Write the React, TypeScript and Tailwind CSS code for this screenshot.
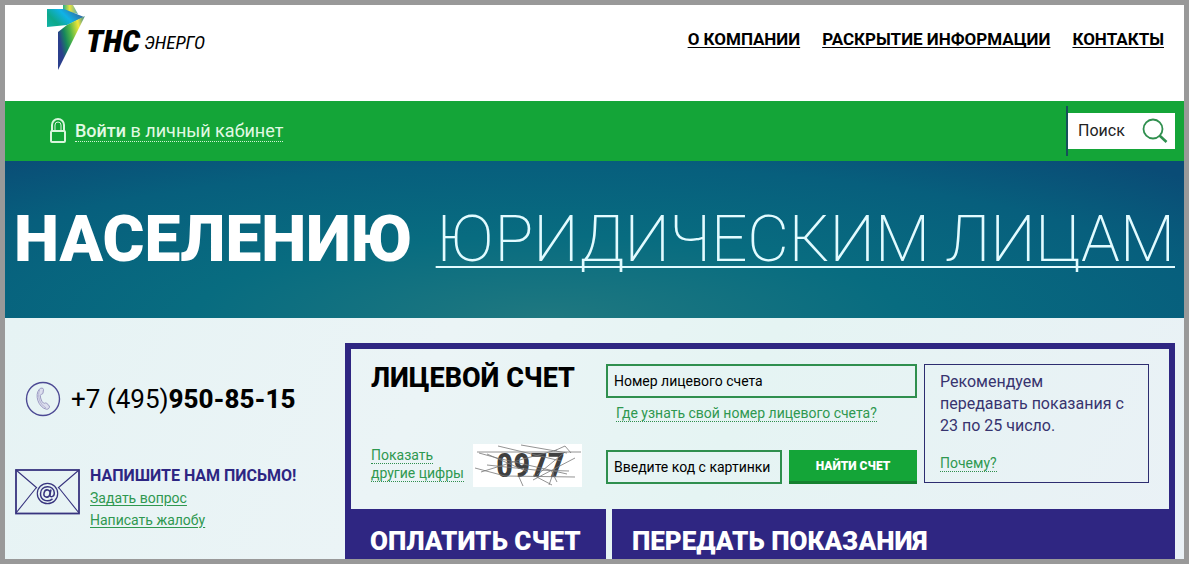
import { ReactNode } from "react";

const navItems = ["О компании", "Раскрытие информации", "Контакты"];

const letterLinks = ["Задать вопрос", "Написать жалобу"];

const tiles = [
  { title: "Оплатить счет", style: "w-[261px] pl-[25px]" },
  { title: "Передать показания", style: "flex-1 pl-5" },
];

function Logo() {
  return (
    <a href="#" aria-label="ТНС энерго" className="flex items-start text-black">
      <svg width="40" height="66" viewBox="0 0 40 66" aria-hidden="true">
        <defs>
          <linearGradient id="top" x1="0" x2="1">
            <stop offset="0" stopColor="#22ac8e" />
            <stop offset="0.45" stopColor="#e9e23c" />
            <stop offset="1" stopColor="#55a9b4" />
          </linearGradient>
          <linearGradient id="wing" x1="0" y1="1" x2="1" y2="0.5">
            <stop offset="0" stopColor="#10b2a8" />
            <stop offset="0.3" stopColor="#0ea88a" />
            <stop offset="0.65" stopColor="#10b2e6" />
            <stop offset="1" stopColor="#2f6fa8" />
          </linearGradient>
          <linearGradient id="stem" x1="0" y1="0.6" x2="1" y2="0.2">
            <stop offset="0.1" stopColor="#2b3f8c" />
            <stop offset="0.3" stopColor="#17875c" />
            <stop offset="0.5" stopColor="#4fb647" />
            <stop offset="0.8" stopColor="#f2e73a" />
            <stop offset="1" stopColor="#5a9a86" />
          </linearGradient>
        </defs>
        <path d="M17 0 H27 L32 9 L17 6 Z" fill="url(#top)" />
        <path d="M1 4 L18 4 L38 12 L21 20 L1 22 Z" fill="url(#wing)" />
        <path d="M39 11 L12 65 V27 L21 20 Z" fill="url(#stem)" />
      </svg>
      <span className="mt-5 text-[32px] leading-8 font-black italic font-['Roboto_Condensed',Roboto,sans-serif]">
        ТНС
      </span>
      <span className="mt-[26px] ml-1 text-[19px] leading-6 italic font-['Roboto_Condensed',Roboto,sans-serif]">
        ЭНЕРГО
      </span>
    </a>
  );
}

function LockIcon() {
  return (
    <svg width="18" height="26" viewBox="0 0 18 26" fill="none" stroke="#d9f6dc" strokeWidth="2" aria-hidden="true">
      <rect x="2" y="13" width="14" height="11" rx="1" />
      <path d="M3 13 V7 a6 6 0 0 1 12 0 V13" />
      <path d="M6 13 V7 a3 3 0 0 1 6 0 V13" strokeWidth="1" />
    </svg>
  );
}

function SearchIcon() {
  return (
    <svg width="26" height="26" viewBox="0 0 26 26" fill="none" stroke="#2f8f4e" aria-hidden="true">
      <circle cx="11" cy="11" r="9.5" strokeWidth="1.8" />
      <path d="M17.5 17.5 L24.5 24" strokeWidth="2.6" />
    </svg>
  );
}

function PhoneIcon() {
  return (
    <svg width="36" height="36" viewBox="0 0 36 36" fill="none" aria-hidden="true">
      <circle cx="18" cy="18" r="16.5" stroke="#4d4a94" strokeWidth="1.4" />
      <path
        d="M14.500 8 C16 6.500 18.500 7 18.500 8.500 L18 12 C18 13.500 15.300 13 15.300 14.500 C15.500 18 16.700 20.500 18.400 22 C19.600 23 20 21.500 21.500 22 L24.300 25 C25 26.500 23.500 28.500 21.500 28.300 C13.500 26.500 9 14 14.500 8 Z"
        fill="#dcdfee"
        stroke="#9b9ac2"
      />
      <path d="M14.500 9 C12.500 15 14 22.500 21 27" stroke="#b3b3d2" />
    </svg>
  );
}

function EnvelopeIcon() {
  return (
    <svg width="65" height="46" viewBox="0 0 65 46" fill="none" stroke="#38347f" aria-hidden="true">
      <rect x="1" y="1" width="63" height="43.500" strokeWidth="1.8" />
      <path d="M1 1 L22 19 M64 1 L43 19 M1 44 L21 19 M64 44 L44 19" strokeWidth="1.1" />
      <circle cx="32.500" cy="24.500" r="10.200" strokeWidth="1.2" />
      <ellipse cx="32" cy="24.500" rx="3" ry="3.600" strokeWidth="1.5" transform="rotate(15 32 24.500)" />
      <path d="M36 20.500 L34.800 26 C34.800 28.500 39.300 28.500 39.300 24 C39.300 15.500 25.500 15.800 25.500 24.700 C25.500 32 33 33.500 37.500 29.800" strokeWidth="1.5" />
    </svg>
  );
}

function Captcha() {
  return (
    <svg width="109" height="43" viewBox="0 0 109 43" fill="none" stroke="#777" strokeWidth="0.8" role="img" aria-label="0977" className="bg-white">
      <text x="23" y="33" fontSize="34" fontWeight="700" fill="#3f3f3f" stroke="none" className="font-['Roboto_Condensed',Roboto,sans-serif]">
        0977
      </text>
      <path d="M25 2 L88 17 M48 1 L94 9 M4 8 L108 8 M6 9 L24 14 L94 30 M2 24 L32 32 L102 33 M14 21 L62 26 L96 27 M8 28 L50 15 L84 6 M60 36 L102 14 M60 31 L79 41 M82 24 L76 41 M81 7 L92 2 L98 9 M64 31 L92 8 M46 33 L50 42 M14 10 L55 28 M78 26 L84 38" />
    </svg>
  );
}

// Green link with a dotted line under each row of text
function DottedLink({ children }: { children: ReactNode }) {
  return (
    <a href="#" className="border-b border-dotted border-[#2f8f4e] text-sm leading-[18px] text-[#2f9850]">
      {children}
    </a>
  );
}

export default function App() {
  return (
    <div className="flex h-screen flex-col overflow-hidden border-5 border-[#999] bg-[#eaf4f5] font-[Roboto,sans-serif] text-black">
      {/* Header */}
      <header className="flex h-24 shrink-0 items-start justify-between bg-white pr-5 pl-[41px]">
        <Logo />
        <nav className="mt-6 flex gap-[22px]">
          {navItems.map((item) => (
            <a
              key={item}
              href="#"
              className="text-[17px] leading-5 font-bold uppercase underline decoration-1 underline-offset-2 [text-decoration-skip-ink:none]"
            >
              {item}
            </a>
          ))}
        </nav>
      </header>

      {/* Login and search */}
      <div className="flex h-15 shrink-0 items-center justify-between bg-[#14a538] pr-[9px] pl-11 text-white">
        <a href="#" className="flex items-center gap-2 text-lg leading-6 text-[#e2fae4]">
          <LockIcon />
          <span className="border-b border-dotted border-[#d0f5d3] leading-5">
            <b className="font-medium">Войти</b> в личный кабинет
          </span>
        </a>
        <form className="flex h-[50px] items-center border-l-2 border-[#16505a]">
          <div className="flex h-9 items-center bg-white pr-[7px] pl-2.5">
            <input
              type="text"
              aria-label="Поиск"
              placeholder="Поиск"
              className="w-[64px] text-base text-black outline-none placeholder:text-[#222]"
            />
            <button type="button" aria-label="Найти">
              <SearchIcon />
            </button>
          </div>
        </form>
      </div>

      {/* Audience switch */}
      <div className="flex h-[157px] shrink-0 items-center justify-between bg-[radial-gradient(ellipse_75%_130%_at_46%_100%,#1f7880_0%,#086c80_40%,#075f7d_75%,#0a4c76_100%)] px-[9px] text-[64px] leading-[72px] whitespace-nowrap text-white uppercase">
        <h1 className="font-black">Населению</h1>
        <a href="#" className="font-extralight text-[#e2fbff] underline decoration-2 underline-offset-5 [text-decoration-skip-ink:none]">
          Юридическим лицам
        </a>
      </div>

      <main className="flex min-h-0 flex-1 bg-[linear-gradient(115deg,#e6f3f4,#ebf4f6_35%,#e5f4f3_60%,#eaf1f6)] pr-[9px]">
        {/* Contacts */}
        <aside className="w-[340px] shrink-0 pt-[63px] pl-2.5">
          <div className="flex items-center gap-2.5 pl-2.5">
            <PhoneIcon />
            <p className="text-[26px] leading-9">
              +7 (495)<b className="font-extrabold">950-85-15</b>
            </p>
          </div>
          <div className="mt-[52px] flex gap-2.5">
            <EnvelopeIcon />
            <div className="-mt-1 flex flex-col items-start">
              <h2 className="text-base leading-[22px] font-bold text-[#2d2683] uppercase">Напишите нам письмо!</h2>
              {letterLinks.map((link) => (
                <a key={link} href="#" className="text-sm leading-[22px] text-[#2f9850] underline underline-offset-2">
                  {link}
                </a>
              ))}
            </div>
          </div>
        </aside>

        {/* Account */}
        <section className="mt-[25px] flex flex-1 flex-col">
          <form className="flex h-[166px] shrink-0 border-x-6 border-t-6 border-[#2f2682] pt-[15px] pr-5 pl-5">
            <div className="flex w-[235px] shrink-0 flex-col justify-between pb-[22px]">
              <h2 className="text-[27px] leading-7 font-extrabold uppercase">Лицевой счет</h2>
              <div className="flex items-start justify-between pr-6">
                <p className="mt-0.5 w-[95px] leading-[18px]">
                  <DottedLink>Показать другие цифры</DottedLink>
                </p>
                <Captcha />
              </div>
            </div>

            <div className="flex-1">
              <input
                type="text"
                aria-label="Номер лицевого счета"
                placeholder="Номер лицевого счета"
                className="h-[34px] w-full border-2 border-[#2f8f4e] px-1.5 text-sm outline-none placeholder:text-black"
              />
              <p className="mt-1.5 pl-2.5 leading-[18px]">
                <DottedLink>Где узнать свой номер лицевого счета?</DottedLink>
              </p>
              <div className="mt-7 flex gap-[7px]">
                <input
                  type="text"
                  aria-label="Введите код с картинки"
                  placeholder="Введите код с картинки"
                  className="h-[34px] w-[176px] border-2 border-[#2f8f4e] px-1.5 text-sm outline-none placeholder:text-black"
                />
                <button type="button" className="h-[34px] flex-1 border-b-3 border-[#15812f] bg-[#14a538] text-xs font-black text-white uppercase">
                  Найти счет
                </button>
              </div>
            </div>

            <div className="ml-[7px] h-[119px] w-[225px] shrink-0 border border-[#2d2d70] px-[15px] pt-1.5">
              <p className="mb-3.5 text-base leading-[22px] text-[#37346f]">
                Рекомендуем передавать показания с 23 по 25 число.
              </p>
              <DottedLink>Почему?</DottedLink>
            </div>
          </form>

          <div className="flex flex-1 gap-1.5">
            {tiles.map((tile) => (
              <a key={tile.title} href="#" className={`${tile.style} bg-[#2f2682] pt-4 text-[26px] leading-8 font-black text-white uppercase`}>
                {tile.title}
              </a>
            ))}
          </div>
        </section>
      </main>
    </div>
  );
}
